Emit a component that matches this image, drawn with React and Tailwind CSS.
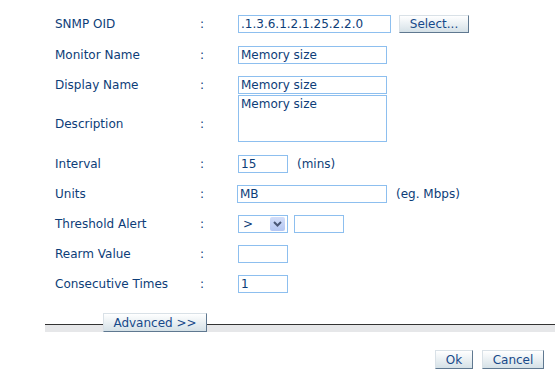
import React from "react";

const font = { fontFamily: '"DejaVu Sans", Verdana, sans-serif' };

function Btn({ children, w, h = "h-[18px]", extra = "" }) {
  return (
    <button
      className={`${w} ${h} ${extra} flex items-center justify-center border border-t-[#d9e1e7] border-l-[#d9e1e7] border-b-[#5f7890] border-r-[#5f7890] bg-gradient-to-b from-white to-[#d5e1e7] text-[12px] text-[#17498a] leading-none`}
    >
      {children}
    </button>
  );
}

function Label({ children, colon = "w-[38px]" }) {
  return (
    <>
      <div className="w-[145px] shrink-0">{children}</div>
      <div className={`${colon} shrink-0`}>:</div>
    </>
  );
}

const inp =
  "h-[18px] border border-[#8dbfef] bg-white px-[2px] text-[12px] text-[#0d3d78] leading-none flex items-center";

export default function App() {
  return (
    <div
      className="w-[559px] h-[378px] bg-white text-[12px] text-[#0d3d78] leading-none overflow-hidden"
      style={font}
    >
      <div className="pl-[55px] pt-[15px] flex flex-col">
        <div className="flex items-center h-[18px] mb-[13px]">
          <Label>SNMP OID</Label>
          <div className={`${inp} w-[153px]`}>.1.3.6.1.2.1.25.2.2.0</div>
          <Btn w="w-[70px] ml-[8px]">Select...</Btn>
        </div>
        <div className="flex items-center h-[18px] mb-[12px]">
          <Label>Monitor Name</Label>
          <div className={`${inp} w-[149px]`}>Memory size</div>
        </div>
        <div className="flex items-center h-[18px] mb-[1px]">
          <Label>Display Name</Label>
          <div className={`${inp} w-[149px]`}>Memory size</div>
        </div>
        <div className="flex items-start h-[47px] mb-[13px]">
          <div className="w-[145px] shrink-0 mt-[23px]">Description</div>
          <div className="w-[38px] shrink-0 mt-[23px]">:</div>
          <div className="w-[149px] h-[47px] border border-[#8dbfef] px-[2px] pt-[2px]">
            Memory size
          </div>
        </div>
        <div className="flex items-center h-[18px] mb-[12px]">
          <Label>Interval</Label>
          <div className={`${inp} w-[50px]`}>15</div>
          <span className="ml-[9px]">(mins)</span>
        </div>
        <div className="flex items-center h-[18px] mb-[12px]">
          <Label colon="w-[37px]">Units</Label>
          <div className={`${inp} w-[150px]`}>MB</div>
          <span className="ml-[9px]">(eg. Mbps)</span>
        </div>
        <div className="flex items-center h-[18px] mb-[12px]">
          <Label>Threshold Alert</Label>
          <div className="w-[50px] h-[18px] border border-[#8dbfef] flex items-center justify-between pl-[4px] pr-[2px]">
            <span>&gt;</span>
            <span className="w-[15px] h-[14px] rounded-[2px] bg-gradient-to-b from-[#d3def9] to-[#b4c6f2] flex items-center justify-center">
              <svg width="9" height="6" viewBox="0 0 9 6">
                <path d="M1 1 L4.5 4.5 L8 1" stroke="#4a5776" strokeWidth="2" fill="none" />
              </svg>
            </span>
          </div>
          <div className={`${inp} w-[50px] ml-[6px]`}></div>
        </div>
        <div className="flex items-center h-[18px] mb-[12px]">
          <Label>Rearm Value</Label>
          <div className={`${inp} w-[50px]`}></div>
        </div>
        <div className="flex items-center h-[18px]">
          <Label>Consecutive Times</Label>
          <div className={`${inp} w-[50px]`}>1</div>
        </div>
      </div>

      <div className="ml-[45px] w-[510px] flex items-end mt-[20px] h-[19px]">
        <div className="w-[58px] h-[8px] border-t border-[#333] bg-[#e6e7e9]" />
        <Btn w="w-[104px]" h="h-[19px]">Advanced &gt;&gt;</Btn>
        <div className="flex-1 h-[8px] border-t border-[#333] bg-[#e6e7e9]" />
      </div>

      <div className="flex justify-end pr-[15px] mt-[18px] gap-[9px]">
        <Btn w="w-[38px]" h="h-[19px]">Ok</Btn>
        <Btn w="w-[62px]" h="h-[19px]">Cancel</Btn>
      </div>
    </div>
  );
}
